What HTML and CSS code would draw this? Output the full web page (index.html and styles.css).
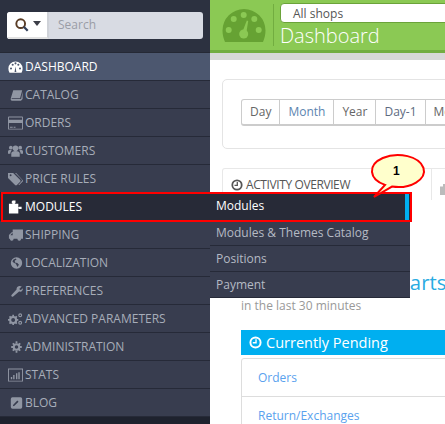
FILE: index.html
```html
<!doctype html>
<html lang="en">
<head>
	<meta charset="UTF-8">
	<title>Dashboard</title>
	<link rel="stylesheet" href="styles.css">
</head>
<body>
	<div class="sidebar">
		<div class="search-wrap">
			<div class="search">
				<div class="search-btn">
					<svg class="search-icon" viewBox="0 0 16 16"><circle cx="6.500" cy="6.500" r="5" fill="none" stroke="#5a3d26" stroke-width="2.200"/><path d="M10 10l4.500 4.500" stroke="#33405a" stroke-width="2.600"/></svg>
					<span class="caret"></span>
				</div>
				<div class="search-input">Search</div>
			</div>
		</div>
		<ul class="menu">
			<li class="menu-item active">
				<svg class="icon" viewBox="0 0 16 14"><path fill-rule="evenodd" d="M8 1a7.600 7.600 0 0 0-7.600 7.600c0 1.600.4 3 1.200 4.400h12.800c.8-1.400 1.200-2.800 1.200-4.400A7.600 7.600 0 0 0 8 1zM3.200 9.600a1.100 1.100 0 1 1 0-2.200 1.100 1.100 0 0 1 0 2.200zM5 5.600a1.100 1.100 0 1 1 0-2.200 1.100 1.100 0 0 1 0 2.200zM8 4.200a1.100 1.100 0 1 1 0-2.200 1.100 1.100 0 0 1 0 2.200zM12.800 9.600a1.100 1.100 0 1 1 0-2.200 1.100 1.100 0 0 1 0 2.200zM11 5.600a1.100 1.100 0 1 1 0-2.200 1.100 1.100 0 0 1 0 2.200zM7 12.400l.9-6 1 6z"/></svg>
				Dashboard
			</li>
			<li class="menu-item">
				<svg class="icon narrow" viewBox="0 0 16 14"><path d="M4 1h11l-2.600 10H2.600c-.6 0-.9.8-.3 1h10.800l.7-.4L15.500 3v9l-2 2H2.500C1 14 .6 12.500 1 11z"/></svg>
				Catalog
			</li>
			<li class="menu-item">
				<svg class="icon" viewBox="0 0 16 14"><path fill-rule="evenodd" d="M1 0h14a1 1 0 0 1 1 1v12a1 1 0 0 1-1 1H1a1 1 0 0 1-1-1V1a1 1 0 0 1 1-1zm0 3.500h14V1H1zM1 7v6h14V7zm1 4h3v1H2zm4 0h2v1H6z"/></svg>
				Orders
			</li>
			<li class="menu-item">
				<svg class="icon" viewBox="0 0 16 14"><circle cx="8" cy="4" r="3"/><circle cx="3" cy="3.500" r="2"/><circle cx="13" cy="3.500" r="2"/><path d="M3.500 13V9.500C3.500 8 5 7 8 7s4.500 1 4.500 2.500V13zM0 10V7.500C0 6.500 1 6 3 6l1 .5C3 7.500 2.500 8.500 2.500 10zM16 10V7.500c0-1-1-1.500-3-1.500l-1 .5c1 1 1.500 2 1.500 3.500z"/></svg>
				Customers
			</li>
			<li class="menu-item">
				<svg class="icon" viewBox="0 0 16 14"><path fill-rule="evenodd" d="M0 .5h5.500L13 8a1.500 1.500 0 0 1 0 2l-3.500 3.500a1.500 1.500 0 0 1-2 0L0 6zM2.800 2a1 1 0 1 0 0 2 1 1 0 0 0 0-2z"/><path d="M7.500.5h1.200L15.500 8a1.500 1.500 0 0 1 0 2L12 13.500h-1l3.500-4a1.500 1.500 0 0 0 0-2z"/></svg>
				Price Rules
			</li>
			<li class="menu-item current">
				<svg class="icon" viewBox="0 0 16 14"><path d="M5 0h3v2.500L7 3.500h4v4l1-.8h2.500v2.500H12l-1-.8V14H1V3.500h4L4 2.500V1z"/></svg>
				Modules
			</li>
			<li class="menu-item">
				<svg class="icon" viewBox="0 0 16 14"><path fill-rule="evenodd" d="M5 1h11v10h-2a2 2 0 0 1-4 0H6a2 2 0 0 1-4 0H1V7l3-3h1zM2.500 7.200h2.500V5H4.300z"/><circle cx="4" cy="11.500" r="1"/><circle cx="12" cy="11.500" r="1"/></svg>
				Shipping
			</li>
			<li class="menu-item">
				<svg class="icon narrow" viewBox="0 0 16 14"><path fill-rule="evenodd" d="M8 0a7 7 0 1 1 0 14A7 7 0 0 1 8 0zM4 3l-1 2 2 2 2 .500 1 2 1 2.500 2-3-2-2-3-.500V4l2-1-1-1.500z"/></svg>
				Localization
			</li>
			<li class="menu-item">
				<svg class="icon narrow" viewBox="0 0 16 14"><path d="M14.500 1.500l-2.800 2.300.3 1.600 1.500.4 2.300-2.300c.3 2-.9 4-3 4.300-.6.100-1.100 0-1.600-.1L4.300 13.600a1.500 1.500 0 0 1-2.200-2.100l6-6.300C7.800 3.200 9.100 1.200 11.200.8c1.200-.2 2.400.1 3.300.7z"/></svg>
				Preferences
			</li>
			<li class="menu-item">
				<svg class="icon" viewBox="0 0 16 14"><circle cx="5.500" cy="8" r="3.200" fill="none" stroke="currentColor" stroke-width="2.200"/><path d="M5.500 2.500v2M5.500 11.500v2M0 8h2M9 8h2M1.600 4.100L3 5.500M8 10.500l1.400 1.400M9.400 4.100L8 5.500M3 10.500l-1.400 1.400" stroke="currentColor" stroke-width="1.800"/><circle cx="13" cy="3" r="1.500" fill="none" stroke="currentColor" stroke-width="1.200"/><circle cx="13" cy="11" r="1.500" fill="none" stroke="currentColor" stroke-width="1.200"/></svg>
				Advanced Parameters
			</li>
			<li class="menu-item">
				<svg class="icon narrow" viewBox="0 0 16 14"><circle cx="8" cy="7" r="3.400" fill="none" stroke="currentColor" stroke-width="2.400"/><path d="M8 0v2.500M8 11.500V14M1.500 7H4M12 7h2.500M3.400 2.400l1.800 1.800M10.800 9.800l1.800 1.800M12.600 2.400l-1.800 1.800M5.200 9.800l-1.800 1.800" stroke="currentColor" stroke-width="2.200"/></svg>
				Administration
			</li>
			<li class="menu-item">
				<svg class="icon" viewBox="0 0 16 14"><path fill-rule="evenodd" d="M0 0h16v14H0zm1 1v12h14V1zM3 9h1.500v2.500H3zM5.500 7H7v4.500H5.500zM8.500 5H10v6.500H8.500zM11 4h1.500v7.500H11z"/></svg>
				Stats
			</li>
			<li class="menu-item">
				<svg class="icon narrow" viewBox="0 0 16 14"><path fill-rule="evenodd" d="M3 0h10a2 2 0 0 1 2 2v10a2 2 0 0 1-2 2H3a2 2 0 0 1-2-2V2a2 2 0 0 1 2-2zm6 4l-5 5-.500 2 2-.500 5-5z"/></svg>
				Blog
			</li>
		</ul>
	</div>

	<div class="main">
		<div class="header">
			<svg class="header-gauge" viewBox="0 0 44 33"><path fill="#66a233" d="M22 0A21.500 21.500 0 0 0 .5 21.500c0 4 1 8 2.500 11.500h38c1.500-3.500 2.500-7.500 2.500-11.500A21.500 21.500 0 0 0 22 0z"/><g fill="#8bc954"><circle cx="11.700" cy="10" r="3"/><circle cx="21.700" cy="6" r="3"/><circle cx="32.300" cy="10" r="3"/><circle cx="6.700" cy="21" r="3"/><circle cx="36.700" cy="21" r="3"/><circle cx="21.700" cy="25" r="4.500"/><path d="M20 24l4.800-12.500 1.400.4-2 12.500z"/></g></svg>
			<div class="header-right">
				<div class="shop-select">All shops</div>
				<div class="page-title">Dashboard</div>
			</div>
		</div>
		<div class="header-shadow"></div>

		<div class="content">
			<div class="range-panel">
				<div class="range-group">
					<span class="range-btn dark">Day</span>
					<span class="range-btn blue">Month</span>
					<span class="range-btn dark">Year</span>
					<span class="range-btn slate">Day-1</span>
					<span class="range-btn dark">Month-1</span>
				</div>
			</div>

			<div class="tabs">
				<div class="tab">
					<svg class="tab-icon" viewBox="0 0 12 12"><circle cx="6" cy="6" r="4.700" fill="none" stroke="currentColor" stroke-width="1.800"/><path d="M6.300 3v3.300H3.500" fill="none" stroke="currentColor" stroke-width="1.300"/></svg>
					Activity Overview
				</div>
				<div class="tab-next">
					<svg class="tab-icon" viewBox="0 0 12 12"><path d="M4 0h3v2.500h4v3l-1-.5H8v2l1.500.5V11H1V2.500h3z"/></svg>
				</div>
			</div>

			<div class="live-block">
				<div class="live-title">Active Shopping Carts</div>
				<div class="live-sub">in the last 30 minutes</div>
			</div>

			<div class="pending-head">
				<svg class="pending-icon" viewBox="0 0 12 12"><circle cx="6" cy="6" r="4.700" fill="none" stroke="#fff" stroke-width="1.800"/><path d="M6.500 3v3.300H3.500" fill="none" stroke="#fff" stroke-width="1.300"/></svg>
				Currently Pending
			</div>
			<div class="pending-list">
				<div class="pending-row">Orders</div>
				<div class="pending-row">Return/Exchanges</div>
			</div>
		</div>
	</div>

	<!-- flyout over the page, then the tutorial marks -->
	<ul class="submenu">
		<li class="sub-item current">Modules</li>
		<li class="sub-item">Modules &amp; Themes Catalog</li>
		<li class="sub-item">Positions</li>
		<li class="sub-item">Payment</li>
	</ul>
	<div class="red-box"></div>
	<svg class="callout" width="70" height="50" viewBox="0 0 70 50">
		<path d="M19 34.900A26 16 0 1 1 26 36.600L8 47z" fill="#ffffcc" stroke="#f00" stroke-width="2"/>
		<text x="27" y="25" class="callout-num">1</text>
	</svg>
</body>
</html>
```

FILE: styles.css
```css
*{
	padding: 0;
	margin: 0;
	box-sizing: border-box;
	font-family: "Open Sans", sans-serif;
}
html, body{
	width: 445px;
	height: 424px;
	overflow: hidden;
}
body{
	display: flex;
	position: relative;
	background-color: #fff;
}
ul{
	list-style: none;
}

/* sidebar */
.sidebar{
	width: 210px;
	height: 424px;
	flex-shrink: 0;
	background-color: #1e222e;
}
.search-wrap{
	height: 53px;
	padding: 12px 7px 0;
	background-color: #2c3140;
	border-bottom: 1px solid #252935;
}
.search{
	display: flex;
	height: 27px;
	border-radius: 3px;
	overflow: hidden;
	background-color: #d8dbe3;
}
.search-btn{
	width: 42px;
	display: flex;
	align-items: center;
	padding-left: 8px;
	gap: 4px;
	background-color: #fff;
	border-right: 2px solid #cfd2d8;
	border-bottom: 2px solid #e2e2e2;
}
.search-icon{
	width: 14px;
	height: 14px;
}
.caret{
	width: 0;
	height: 0;
	margin-bottom: 3px;
	border-left: 4px solid transparent;
	border-right: 4px solid transparent;
	border-top: 5px solid #3d3f48;
}
.search-input{
	flex: 1;
	padding-left: 9px;
	font-size: 12px;
	line-height: 26px;
	color: #9a9da6;
}
.menu-item{
	display: flex;
	align-items: center;
	height: 28px;
	padding-left: 8px;
	gap: 2px;
	font-size: 12px;
	color: #a7adb9;
	text-transform: uppercase;
	background-color: #383d4f;
	border-bottom: 1px solid #262a38;
}
.menu-item.active{
	color: #fff;
	background-color: #4c576f;
}
.menu-item.current{
	color: #fff;
	background-color: #272a37;
}
.icon{
	width: 15px;
	height: 14px;
	fill: currentColor;
	flex-shrink: 0;
	opacity: .8;
}
.icon.narrow{
	width: 13px;
	margin-left: 2px;
}
.active .icon, .current .icon{
	opacity: 1;
}

/* green header */
.main{
	width: 235px;
	overflow: hidden;
}
.header{
	display: flex;
	height: 53px;
	padding-left: 12px;
	background-color: #8bc954;
	border-bottom: 3px solid #73ad41;
}
.header-gauge{
	width: 44px;
	height: 33px;
	margin-top: 9px;
	flex-shrink: 0;
}
.header-right{
	width: 300px;
	height: 42px;
	margin: 4px 0 0 7px;
	padding-left: 6px;
	border-left: 1px solid #72ad40;
	flex-shrink: 0;
}
.shop-select{
	height: 20px;
	margin-top: -1px;
	padding-left: 12px;
	font-size: 12px;
	line-height: 19px;
	color: #555;
	background-color: #fff;
	border: 1px solid #6ba33a;
	border-radius: 4px;
}
.page-title{
	margin-top: -1px;
	font-size: 20px;
	font-weight: 300;
	line-height: 27px;
	color: #fff;
}
.header-shadow{
	height: 7px;
	background-color: #d8d8d8;
}

/* content */
.content{
	width: 500px;
	padding: 19px 0 0 12px;
}
.range-panel{
	height: 70px;
	padding: 19px 0 0 18px;
	border: 1px solid #e4e4e4;
	border-radius: 5px;
}
.range-group{
	display: flex;
	height: 27px;
	border: 1px solid #ccc;
	border-bottom: 2px solid #ccc;
	border-radius: 3px;
	width: max-content;
}
.range-btn{
	padding: 0 8px;
	font-size: 12px;
	line-height: 24px;
	border-right: 1px solid #ccc;
}
.range-btn.dark{
	color: #666;
}
.range-btn.blue{
	color: #5b85b0;
}
.range-btn.slate{
	color: #5d6a80;
}
.tabs{
	display: flex;
	height: 32px;
	margin-top: 19px;
	border: 1px solid #e8e8e8;
	border-bottom: none;
	border-radius: 3px 3px 0 0;
	width: max-content;
}
.tab{
	display: flex;
	align-items: center;
	gap: 3px;
	width: 208px;
	padding-left: 8px;
	font-size: 12px;
	letter-spacing: -.4px;
	color: #555;
	text-transform: uppercase;
}
.tab-next{
	width: 60px;
	padding: 10px 0 0 7px;
	border-left: 1px solid #e8e8e8;
	color: #bbb;
}
.tab-icon{
	width: 12px;
	height: 12px;
	fill: currentColor;
}
.live-block{
	padding: 62px 0 0 19px;
}
.live-title{
	font-size: 20.300px;
	line-height: 40px;
	white-space: nowrap;
	color: #29abe2;
}
.live-sub{
	margin-top: -4px;
	font-size: 12px;
	line-height: 16px;
	color: #999;
}
.pending-head{
	display: flex;
	align-items: center;
	gap: 4px;
	height: 25px;
	margin: 16px 0 0 19px;
	padding-left: 8px;
	font-size: 14.500px;
	color: #fff;
	background-color: #00aff0;
}
.pending-icon{
	width: 13px;
	height: 13px;
}
.pending-list{
	margin: 3px 0 0 19px;
	border: 1px solid #ddd;
	border-radius: 3px;
}
.pending-row{
	height: 38px;
	padding-left: 16px;
	font-size: 12px;
	line-height: 38px;
	color: #5aa2ee;
	border-bottom: 1px solid #ddd;
}

/* flyout */
.submenu{
	position: absolute;
	left: 210px;
	top: 193px;
	width: 200px;
}
.sub-item{
	height: 26px;
	padding-left: 6px;
	font-size: 12px;
	line-height: 25px;
	color: #b5bac4;
	background-color: #383d4f;
	border-bottom: 1px solid #262a38;
}
.sub-item.current{
	height: 27px;
	color: #fff;
	background: #272a37 linear-gradient(#00aff0, #00aff0) no-repeat right 1px top 0 / 4px 100%;
	border-bottom: none;
}

/* tutorial marks */
.red-box{
	position: absolute;
	left: 1px;
	top: 192px;
	width: 411px;
	height: 30px;
	border: 2px solid #f00;
}
.callout{
	position: absolute;
	left: 366px;
	top: 150px;
}
.callout-num{
	font-family: "Liberation Sans", sans-serif;
	font-size: 12px;
	font-weight: bold;
	fill: #000;
}
```
